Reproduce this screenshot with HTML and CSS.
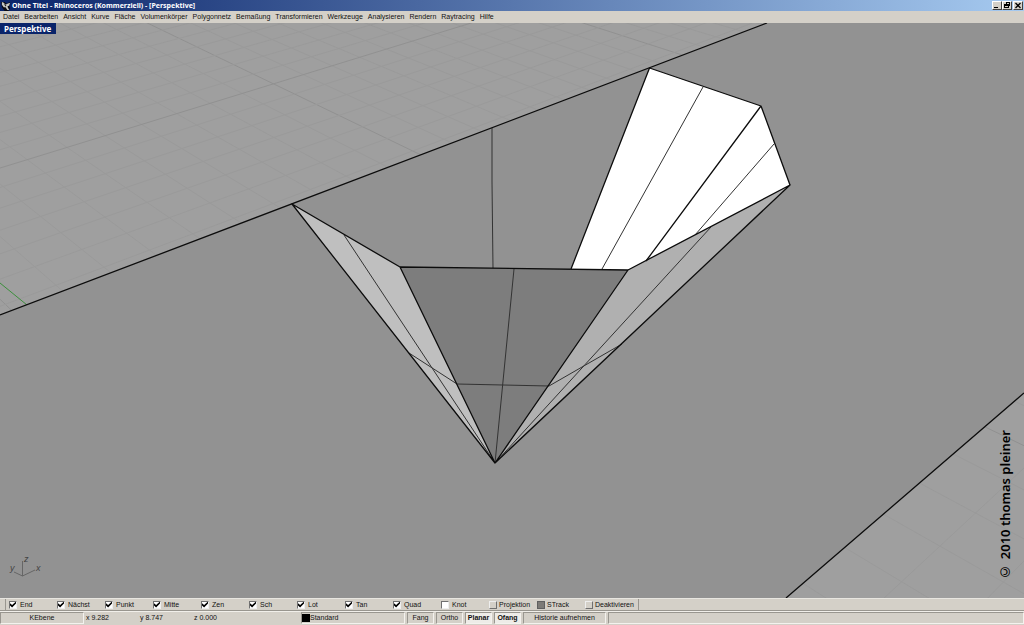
FILE: index.html
```html
<!DOCTYPE html>
<html lang="de">
<head>
<meta charset="utf-8">
<title>Ohne Titel - Rhinoceros (Kommerziell) - [Perspektive]</title>
<link rel="stylesheet" href="styles.css">
</head>
<body>
<header class="titlebar">
  <svg class="app-icon" viewBox="0 0 11 11" aria-hidden="true">
    <path d="M0 1h4l2 2 4-2v3l-1 1 1 3-2 3H4L1 7z" fill="#0b0b12"/>
    <path d="M1 1l2 1 2 2 2-1 3-1-1 3-2 1 2 4-2 0-2-3-2 0-2-3z" fill="#c9c9c4"/>
    <path d="M3 3l3 2-1 1z" fill="#222"/>
  </svg>
  <h1 class="title">Ohne Titel - Rhinoceros (Kommerziell) - [Perspektive]</h1>
  <div class="window-controls">
    <button class="win-btn" type="button" aria-label="Minimieren"><svg viewBox="0 0 8 7"><path d="M1 5h4v1H1z"/></svg></button>
    <button class="win-btn" type="button" aria-label="Wiederherstellen"><svg viewBox="0 0 8 7"><path d="M3 0h4v4H6v2H1V2h2zM4 1v1h2v1V1zM2 4v1h3V4z" fill-rule="evenodd"/></svg></button>
    <button class="win-btn win-close" type="button" aria-label="Schließen"><svg viewBox="0 0 8 7"><path d="M1.500 1l5 5M6.500 1l-5 5" stroke="#000" stroke-width="1.300"/></svg></button>
  </div>
</header>
<nav class="menubar">
  <button type="button">Datei</button><button type="button">Bearbeiten</button><button type="button">Ansicht</button><button type="button">Kurve</button><button type="button">Fläche</button><button type="button">Volumenkörper</button><button type="button">Polygonnetz</button><button type="button">Bemaßung</button><button type="button">Transformieren</button><button type="button">Werkzeuge</button><button type="button">Analysieren</button><button type="button">Rendern</button><button type="button">Raytracing</button><button type="button">Hilfe</button>
</nav>
<main class="viewport">
  <svg class="scene" viewBox="0 23 1024 575" preserveAspectRatio="xMidYMid slice" role="img" aria-label="Perspektivische Ansicht">
    <rect y="23" width="1024" height="575" fill="#9f9f9f"/>
    <g id="grid" fill="none"></g>
    <path d="M0 283L27 305" stroke="#3c8f3c" fill="none"/>
    <path d="M0 315L767 23H1024V393L786 598H0z" fill="#929292"/>
    <g class="faces">
      <path d="M649.500 68L761 106L790 185L628 270L571 269z" fill="#fff"/>
      <path d="M292 204L400 267L495 463z" fill="#bfbfbf"/>
      <path d="M628 270L790 185L495 463z" fill="#b0b0b0"/>
      <path d="M400 267L628 270L495 463z" fill="#7d7d7d"/>
    </g>
    <g class="iso">
      <path d="M492 128V182L493 268"/>
      <path d="M344 235L495 463M409 353L457 384L549 386L622 344"/>
      <path d="M514 269L495 463M711 227L495 463"/>
      <path d="M703 87L602 269M774 144L695 235"/>
    </g>
    <g class="edges">
      <path d="M0 315L767 23M786 598L1024 393"/>
      <path d="M292 204L400 267L495 463zM400 267L628 270L495 463M628 270L790 185L495 463"/>
      <path d="M571 269L649.500 68L761 106L790 185M761 106L646 261"/>
    </g>
    <g class="axes">
      <path d="M22.500 561V576M22.500 576L35 570M22.500 576L14 572"/>
      <text x="24" y="562">z</text><text x="36" y="571">x</text><text x="10" y="571">y</text>
    </g>
  </svg>
  <span class="view-name">Perspektive</span>
  <span class="credit">© 2010 thomas pleiner</span>
</main>
<footer>
  <div class="osnap">
    <div class="snaps">
      <label><input type="checkbox" checked>End</label>
      <label><input type="checkbox" checked>Nächst</label>
      <label><input type="checkbox" checked>Punkt</label>
      <label><input type="checkbox" checked>Mitte</label>
      <label><input type="checkbox" checked>Zen</label>
      <label><input type="checkbox" checked>Sch</label>
      <label><input type="checkbox" checked>Lot</label>
      <label><input type="checkbox" checked>Tan</label>
      <label><input type="checkbox" checked>Quad</label>
      <label><input type="checkbox">Knot</label>
      <label><input type="checkbox" class="push">Projektion</label>
      <label><input type="checkbox" class="push filled">STrack</label>
      <label><input type="checkbox" class="push">Deaktivieren</label>
    </div>
  </div>
  <div class="status">
    <button type="button" class="pane plane">KEbene</button>
    <span class="coord">x 9.282</span><span class="coord">y 8.747</span><span class="coord last">z 0.000</span>
    <button type="button" class="pane layer"><span class="swatch"></span>Standard</button>
    <button type="button" class="pane toggle">Fang</button>
    <button type="button" class="pane toggle">Ortho</button>
    <button type="button" class="pane toggle on">Planar</button>
    <button type="button" class="pane toggle on">Ofang</button>
    <button type="button" class="pane history">Historie aufnehmen</button>
    <span class="pane rest"></span>
  </div>
</footer>
<script src="grid.js"></script>
</body>
</html>
```
FILE: styles.css
```css
* { box-sizing: border-box; }
body {
  margin: 0;
  height: 100vh;
  display: flex;
  flex-direction: column;
  background: #d4d0c8;
  color: #111;
  font: 7px/10px "Liberation Sans", Arial, sans-serif;
  overflow: hidden;
}
button {
  margin: 0;
  padding: 0;
  border: 0;
  background: none;
  color: inherit;
  font: inherit;
}
.titlebar {
  flex: none;
  height: 11px;
  display: flex;
  align-items: center;
  gap: 1px;
  padding: 0 1px;
  background: linear-gradient(90deg, #0a246a, #a6caf0);
  color: #fff;
}
.app-icon { width: 10px; height: 10px; }
.title { flex: 1; margin: 0; font: bold 7px/11px "Noto Sans", sans-serif; }
.window-controls { display: flex; }
.win-btn {
  width: 10px;
  height: 9px;
  background: #d4d0c8;
  border: 1px solid;
  border-color: #fff #404040 #404040 #fff;
}
.win-btn svg { display: block; width: 8px; height: 7px; }
.win-close { margin-left: 1px; }
.menubar {
  flex: none;
  height: 12px;
  display: flex;
  align-items: center;
  gap: 5px;
  padding: 0 3px;
}
.viewport { flex: 1; min-height: 0; position: relative; }
.scene { display: block; width: 100%; height: 100%; }
.minor { stroke: #9a9a9a; }
.major { stroke: #919191; }
.iso { fill: none; stroke: #333; stroke-width: 1; }
.edges { fill: none; stroke: #0c0c0c; stroke-width: 1.3; stroke-linejoin: round; }
.axes path { fill: none; stroke: #666; }
.axes text { font: italic 9px "Liberation Sans", Arial, sans-serif; fill: #444; }
.view-name {
  position: absolute;
  left: 0;
  top: 0;
  padding: 0 5px 0 4px;
  background: #0a246a;
  color: #fff;
  font: bold 8px/11px "Noto Sans", sans-serif;
}
.credit {
  position: absolute;
  right: 9px;
  bottom: 17px;
  writing-mode: vertical-rl;
  transform: rotate(180deg);
  color: #000;
  font: 600 13px/20px "Noto Sans", sans-serif;
}
.osnap {
  height: 13px;
  display: flex;
  padding-left: 5px;
  border-top: 1px solid #e8e6e0;
  border-bottom: 1px solid #99968f;
}
.snaps {
  display: grid;
  grid-template-columns: repeat(13, 48px);
  padding-left: 3px;
  padding-right: 5px;
  border-left: 1px solid #99968f;
  border-right: 1px solid #99968f;
}
.snaps label { display: flex; align-items: center; gap: 3px; white-space: nowrap; }
.snaps input {
  appearance: none;
  flex: none;
  width: 8px;
  height: 8px;
  margin: 0;
  background: #fff;
  border: 1px solid;
  border-color: #707070 #eee #eee #707070;
}
.snaps input:checked::before {
  content: "";
  display: block;
  width: 6px;
  height: 6px;
  background: #000;
  clip-path: polygon(0 30%, 35% 60%, 100% 0, 100% 35%, 35% 100%, 0 65%);
}
.snaps .push { background: #d4d0c8; border-color: #eee #707070 #707070 #eee; }
.snaps .filled { background: #7d7b77; border-color: #606060; }
.snaps label:has(.push) { gap: 2px; }
.status {
  height: 14px;
  display: flex;
  align-items: center;
  gap: 2px;
  padding-bottom: 1px;
  border-top: 1px solid #f1efea;
}
.pane {
  height: 12px;
  border: 1px solid;
  border-color: #99968f #f4f2ee #f4f2ee #99968f;
  white-space: nowrap;
}
.plane { width: 84px; }
.coord { width: 52px; }
.coord.last { flex: none; width: 105px; }
.layer { width: 104px; display: flex; align-items: center; }
.swatch { width: 8px; height: 8px; background: #000; }
.toggle { width: 27px; }
.on { background: #eeece8; font-weight: bold; }
.history { width: 83px; }
.rest { flex: 1; }
```
FILE: grid.js
```javascript
// Construction plane: two families of parallel lines, each meeting at its vanishing point.
const grid = document.getElementById("grid");
const base = 100;
function family(vx, vy, origin, step, from, to) {
  for (let k = from; k <= to; k++) {
    const x = origin + k * step;
    const line = document.createElementNS("http://www.w3.org/2000/svg", "path");
    line.setAttribute("d", `M${vx} ${vy}L${vx + (x - vx) * 3} ${vy + (base - vy) * 3}`);
    line.setAttribute("class", k % 10 === 0 ? "major" : "minor");
    grid.append(line);
  }
}
family(-730, -400, 307, 51.5, -18, 16);
family(2014, -452, 221, 54.5, -16, 26);
```
